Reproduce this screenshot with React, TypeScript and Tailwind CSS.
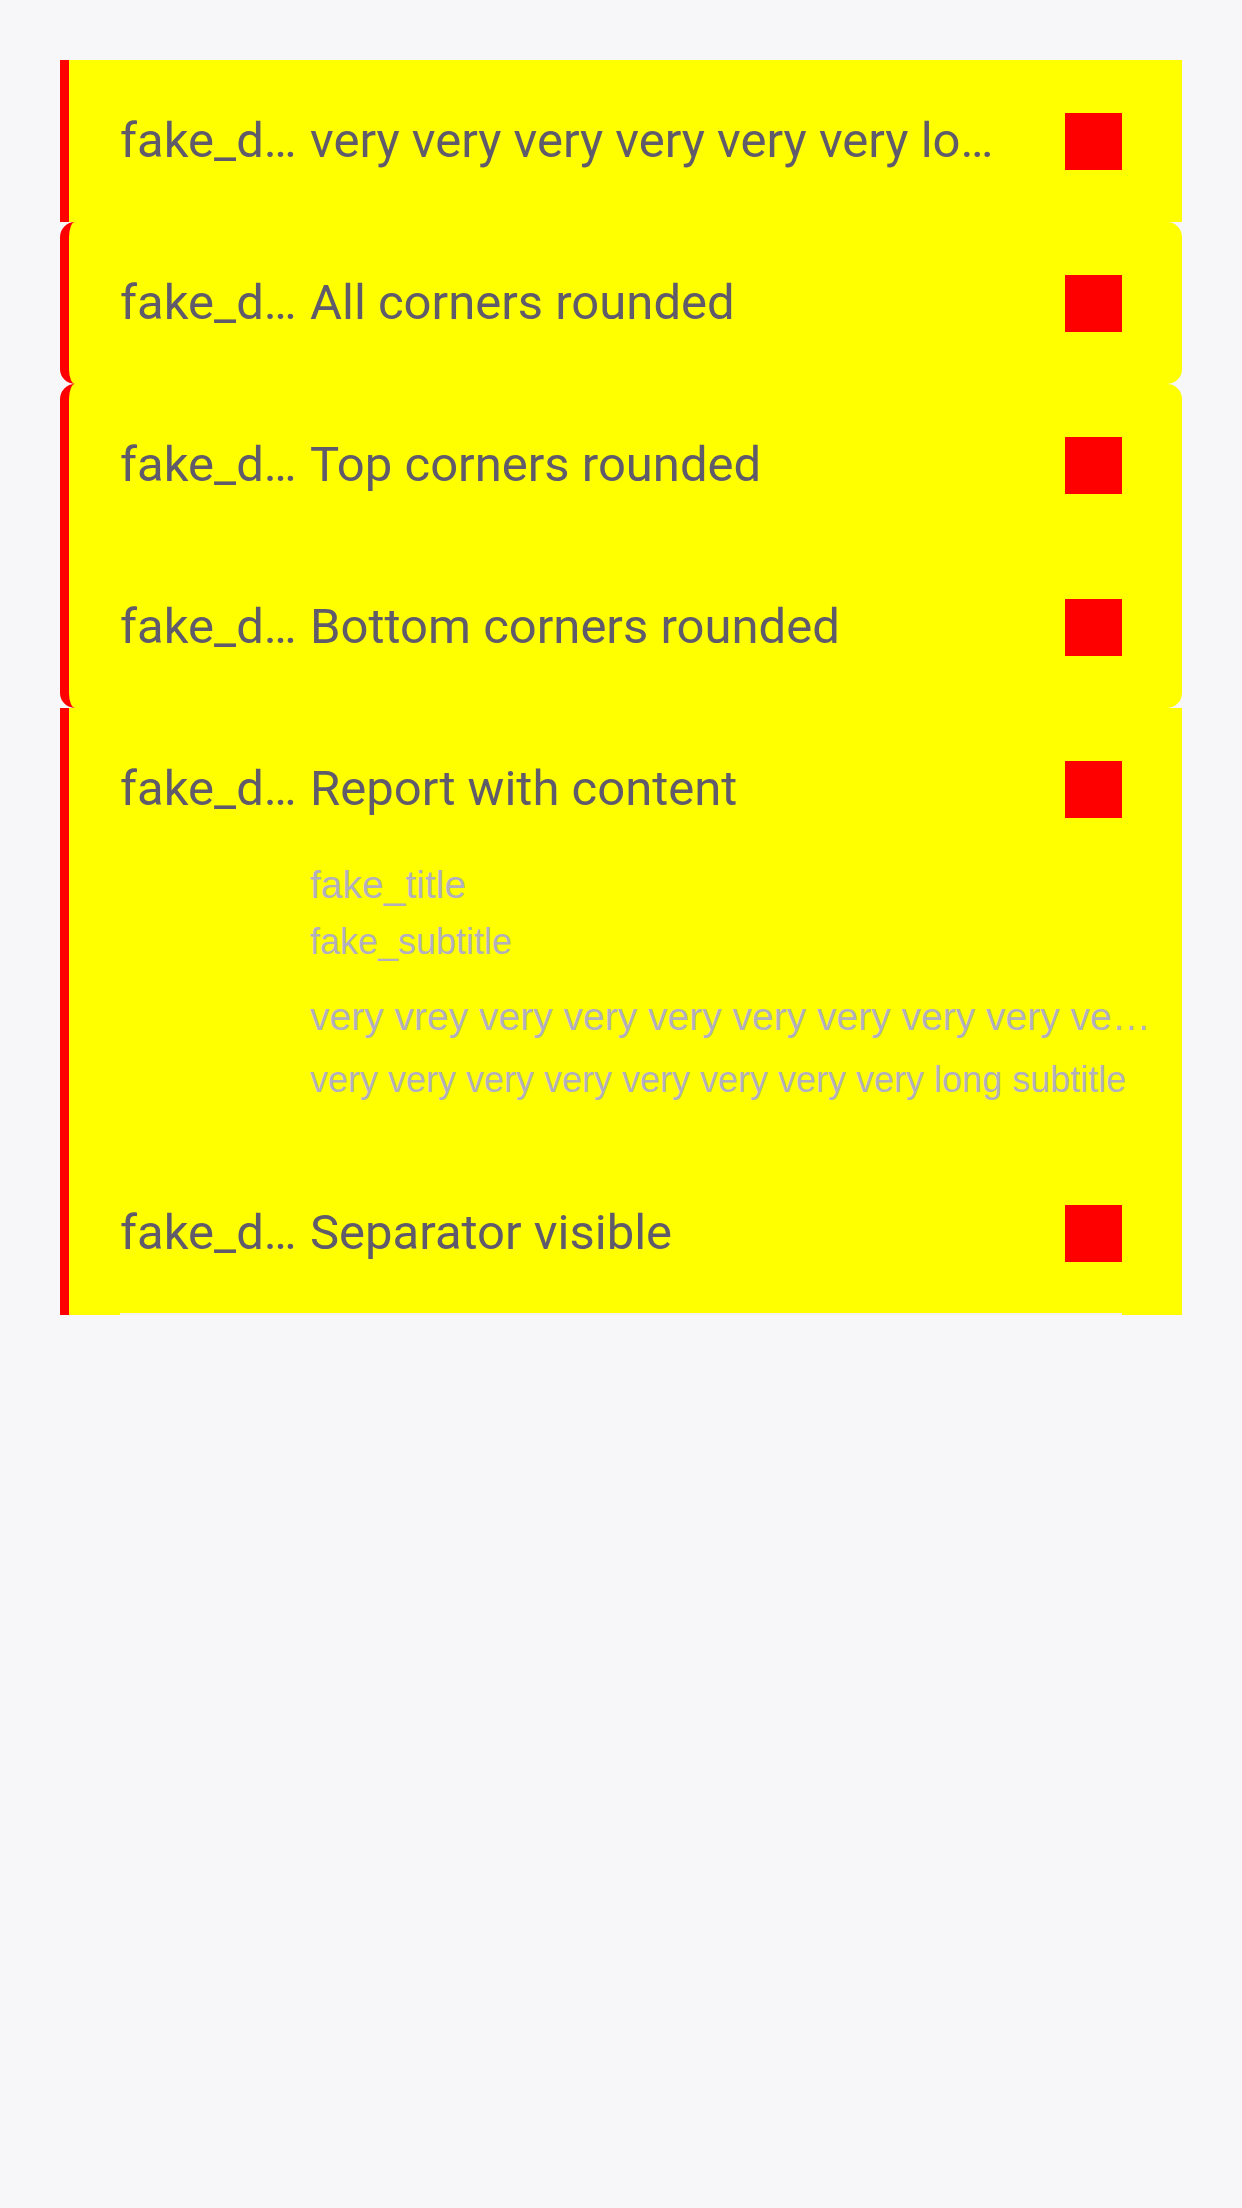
import React from 'react'

type Corners = 'none' | 'all' | 'top' | 'bottom'

const cornerClass: Record<Corners, string> = {
  none: '',
  all: 'rounded-[15px]',
  top: 'rounded-t-[15px]',
  bottom: 'rounded-b-[15px]',
}

function RowHeader({ title, separator }: { title: string; separator?: boolean }) {
  return (
    <div
      className={
        'flex h-[162px] items-center ' + (separator ? 'border-b-2 border-[#f1f1f3]' : '')
      }
    >
      <div className="w-[180px] shrink-0 truncate">fake_description</div>
      <div className="ml-[10px] mr-[62px] min-w-0 flex-1 truncate">{title}</div>
      <div className="h-[57px] w-[57px] shrink-0 bg-[#ff0000]" />
    </div>
  )
}

function ReportRow({
  title,
  corners = 'none',
  separator,
}: {
  title: string
  corners?: Corners
  separator?: boolean
}) {
  return (
    <div
      className={
        'border-l-[9px] border-[#ff0000] bg-[#ffff00] pl-[51px] pr-[60px] ' + cornerClass[corners]
      }
    >
      <RowHeader title={title} separator={separator} />
    </div>
  )
}

export default function App() {
  return (
    <div
      className="min-h-[2208px] bg-[#f7f7f9] px-[60px] pt-[60px] text-[49px] text-[#5f5b6b]"
      style={{ fontFamily: 'Roboto, "Noto Sans", sans-serif' }}
    >
      <div className="flex flex-col">
        <ReportRow title="very very very very very very long title" />
        <ReportRow title="All corners rounded" corners="all" />
        <ReportRow title="Top corners rounded" corners="top" />
        <ReportRow title="Bottom corners rounded" corners="bottom" />
        <div className="border-l-[9px] border-[#ff0000] bg-[#ffff00] pl-[51px]">
          <div className="pr-[60px]">
            <RowHeader title="Report with content" />
          </div>
          <div
            className="ml-[190px] mt-[-8px] pb-[51px] pr-[28px] text-[#b2b0bc]"
            style={{ fontFamily: '"Liberation Sans", Arial, sans-serif' }}
          >
            <div className="truncate text-[39px] leading-[46px]">fake_title</div>
            <div className="mt-[12px] truncate text-[36px] leading-[44px]">fake_subtitle</div>
            <div className="mt-[30px] truncate text-[39px] leading-[46px]">
              very vrey very very very very very very very very very long title
            </div>
            <div className="mt-[18px] truncate text-[36px] leading-[44px]">
              very very very very very very very very long subtitle
            </div>
          </div>
        </div>
        <ReportRow title="Separator visible" separator />
      </div>
    </div>
  )
}
